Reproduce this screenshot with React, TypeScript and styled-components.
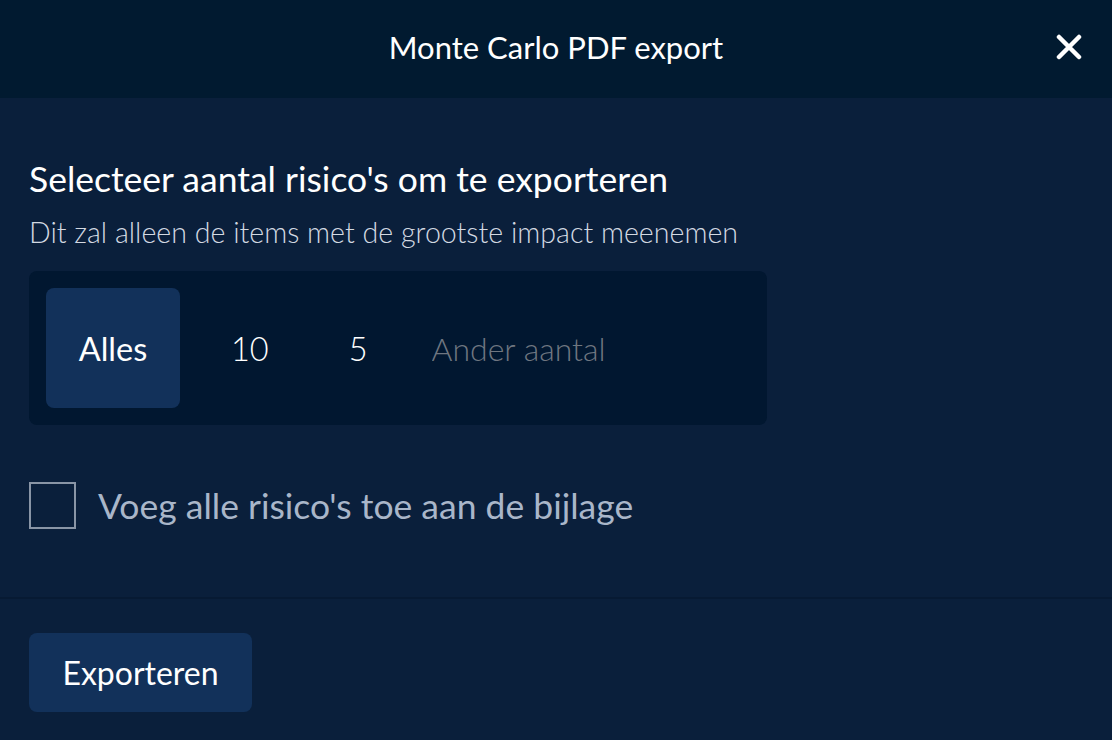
import { useState } from "react";
import styled, { createGlobalStyle } from "styled-components";

const GlobalStyle = createGlobalStyle`
  html, body {
    margin: 0;
    padding: 0;
    background: #0a1f3b;
  }
  body {
    font-family: Lato, "Open Sans", sans-serif;
    color: #ffffff;
  }
`;

// gap after each preset, so the labels sit where the design puts them
const OPTIONS = [
  { label: "Alles", gap: 51 },
  { label: "10", gap: 80 },
  { label: "5", gap: 64 },
];

export default function App() {
  const [selected, setSelected] = useState("Alles");
  const [attach, setAttach] = useState(false);

  return (
    <>
      <GlobalStyle />
      <Dialog>
        <Header>
          <Title>Monte Carlo PDF export</Title>
          <Close aria-label="Sluiten">
            <svg width="26" height="26" viewBox="0 0 26 26">
              <path
                d="M3 3L23 23M23 3L3 23"
                stroke="#ffffff"
                strokeWidth="4.5"
                strokeLinecap="round"
              />
            </svg>
          </Close>
        </Header>
        <Body>
          <Heading>Selecteer aantal risico's om te exporteren</Heading>
          <Hint>Dit zal alleen de items met de grootste impact meenemen</Hint>
          <Segments>
            {OPTIONS.map((o) => (
              <Segment
                key={o.label}
                $active={selected === o.label}
                $gap={o.gap}
                onClick={() => setSelected(o.label)}
              >
                {o.label}
              </Segment>
            ))}
            <OtherInput placeholder="Ander aantal" />
          </Segments>
          <CheckRow onClick={() => setAttach(!attach)}>
            <Box $checked={attach} />
            <CheckLabel>Voeg alle risico's toe aan de bijlage</CheckLabel>
          </CheckRow>
        </Body>
        <Footer>
          <PrimaryButton>Exporteren</PrimaryButton>
        </Footer>
      </Dialog>
    </>
  );
}

const Dialog = styled.div`
  width: 1112px;
  height: 740px;
  display: flex;
  flex-direction: column;
  background: #0a1f3b;
  overflow: hidden;
`;

const Header = styled.div`
  height: 98px;
  flex-shrink: 0;
  box-sizing: border-box;
  padding-bottom: 4px;
  background: #011a30;
  display: flex;
  align-items: center;
  justify-content: center;
  position: relative;
`;

const Title = styled.h1`
  margin: 0;
  font-size: 31px;
  font-weight: 400;
  color: #ffffff;
`;

const Close = styled.button`
  position: absolute;
  right: 30px;
  top: 34px;
  padding: 0;
  border: none;
  background: none;
  cursor: pointer;
  display: flex;
`;

const Body = styled.div`
  flex: 1;
  padding: 58px 29px 0;
  border-bottom: 2px solid #071a33;
`;

const Heading = styled.h2`
  margin: 0;
  font-size: 35.5px;
  font-weight: 400;
  line-height: 46px;
`;

const Hint = styled.p`
  margin: 12px 0 0;
  font-size: 28.6px;
  font-weight: 300;
  line-height: 36px;
  color: #d3d9e2;
`;

const Segments = styled.div`
  margin-top: 21px;
  width: 738px;
  box-sizing: border-box;
  padding: 17px;
  background: #011730;
  border-radius: 8px;
  display: flex;
  align-items: center;
`;

const Segment = styled.button<{ $active: boolean; $gap: number }>`
  height: 120px;
  min-width: ${(p) => (p.$active ? "134px" : "0")};
  padding: 0;
  margin-right: ${(p) => p.$gap}px;
  border: none;
  border-radius: 8px;
  background: ${(p) => (p.$active ? "#12315a" : "transparent")};
  color: #ffffff;
  font-family: inherit;
  font-size: 32.5px;
  font-weight: ${(p) => (p.$active ? 400 : 300)};
  cursor: pointer;
`;

const OtherInput = styled.input`
  flex: 1;
  min-width: 0;
  padding: 0;
  border: none;
  outline: none;
  background: transparent;
  color: #ffffff;
  font-family: inherit;
  font-size: 32px;
  font-weight: 300;
  &::placeholder {
    color: #6f7680;
  }
`;

const CheckRow = styled.div`
  margin-top: 57px;
  display: flex;
  align-items: center;
  gap: 22px;
  cursor: pointer;
`;

const Box = styled.div<{ $checked: boolean }>`
  width: 47px;
  height: 47px;
  box-sizing: border-box;
  border: 2px solid #8995a6;
  background: ${(p) => (p.$checked ? "#8995a6" : "transparent")};
`;

const CheckLabel = styled.span`
  font-size: 35.5px;
  font-weight: 400;
  color: #a9b6c9;
`;

const Footer = styled.div`
  height: 141px;
  flex-shrink: 0;
  box-sizing: border-box;
  padding: 34px 29px 0;
`;

const PrimaryButton = styled.button`
  width: 223px;
  height: 79px;
  border: none;
  border-radius: 8px;
  background: #12315a;
  color: #ffffff;
  font-family: inherit;
  font-size: 32px;
  font-weight: 400;
  cursor: pointer;
`;
